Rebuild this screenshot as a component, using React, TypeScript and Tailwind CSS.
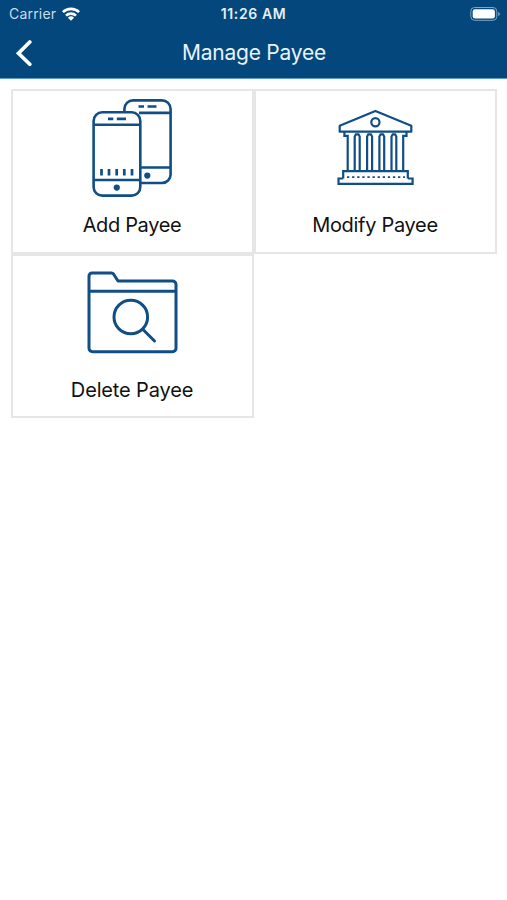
import type { ReactNode } from "react";

function PhonesIcon() {
  return (
    <svg viewBox="77.500 91 110 112" className="h-28 w-[110px]" fill="none" stroke="#114e86" strokeWidth="2.600">
      <path d="M124.900 112V109a8.600 8.600 0 0 1 8.600-8.600H162.500a8.600 8.600 0 0 1 8.600 8.600V174.400a8.600 8.600 0 0 1-8.600 8.600H141.500" />
      <path d="M139.500 112.900H171M141.500 167.500H171" />
      <path d="M139 106.500H144.500M148 106.500H157" />
      <rect x="94.100" y="112.300" width="46.700" height="83.300" rx="8.600" />
      <path d="M94 124.700H141M94 180H141" />
      <path d="M108.500 118.900H113.800M117.300 118.900H126.500" />
      <path d="M102 169V175.500M109.500 169V175.500M117.200 169V175.500M124.800 169V175.500M132.500 169V175.500" strokeWidth="2.700" />
      <circle cx="117.300" cy="187.600" r="3.100" fill="#114e86" stroke="none" />
      <circle cx="147.800" cy="175.600" r="3.100" fill="#114e86" stroke="none" />
    </svg>
  );
}

function BankIcon() {
  return (
    <svg viewBox="320.500 91 110 112" className="h-28 w-[110px]" fill="none" stroke="#114e86" strokeWidth="2.200">
      <path d="M340.200 131.700V125.700L375.900 110.900L411.800 125.700V131.700Z" strokeLinejoin="round" />
      <circle cx="375.900" cy="122.300" r="4.100" />
      <path d="M344.900 132V135.800H348.200V171M407 132V135.800H403.700V171" />
      <path d="M355.200 171V136.500L356.400 134.300H359L360.200 136.500V171M367.600 171V136.500L368.800 134.300H371.400L372.600 136.500V171M379.900 171V136.500L381.100 134.300H383.500L384.700 136.500V171M392 171V136.500L393.200 134.300H395.600L396.800 136.500V171" />
      <path d="M343.700 178.500V171.200H408.300V178.500M343.700 178.500H339V183.800H413.100V178.500H408.300" />
      <path d="M347.500 177.100H405.500" strokeWidth="1.800" strokeDasharray="2.300 2.800" />
    </svg>
  );
}

function FolderIcon() {
  return (
    <svg viewBox="77.500 256 110 112" className="h-28 w-[110px]" fill="none" stroke="#114e86" strokeWidth="3">
      <path d="M89.500 276a3 3 0 0 1 3-3H112q1.200 0 2 1L118.500 281H173a3.500 3.500 0 0 1 3.500 3.500V348.200a3.500 3.500 0 0 1-3.500 3.500H93a3.500 3.500 0 0 1-3.500-3.500Z" strokeLinejoin="round" />
      <path d="M89.500 291.200H176.500" />
      <circle cx="131.300" cy="317" r="16.800" />
      <path d="M143.500 329.500L155 341" strokeLinecap="round" />
    </svg>
  );
}

function Tile({ label, spacing, children }: { label: string; spacing: string; children: ReactNode }) {
  return (
    <button className="flex h-[164.500px] flex-col items-center border-2 border-[#e6e6e6] bg-white">
      {children}
      <span className={`mt-2 text-[20px] leading-7 text-[#111] ${spacing}`}>{label}</span>
    </button>
  );
}

export default function App() {
  return (
    <main className="h-[900px] w-[507px] overflow-hidden bg-white font-['Inter',sans-serif]">
      <header className="h-[79px] border-b border-[#5b9acb] bg-[#03477c] text-white">
        <div className="grid h-7 grid-cols-3 items-center pl-[9px] pr-[9px]">
          <div className="-mt-px flex items-center gap-[6px] text-[14px] text-[#c9dcea]">
            <span className="tracking-[0.2px]">Carrier</span>
            <svg viewBox="0 0 18 14" className="h-[14px] w-[18px]" fill="none" stroke="white" strokeWidth="2.600">
              <path d="M.9 5.200a11.500 11.500 0 0 1 16.200 0M4 8.700a7.100 7.100 0 0 1 10 0" />
              <path d="M9 13.800L5.900 10.800a4.500 4.500 0 0 1 6.200 0Z" fill="white" stroke="none" />
            </svg>
          </div>
          <time className="-mt-0.5 text-center text-[14px] font-semibold tracking-[0.600px] text-[#e4eef6]">11:26 AM</time>
          <svg viewBox="0 0 30 14" className="-mr-0.5 -mt-px h-[14px] w-[30px] justify-self-end">
            <rect x=".8" y=".5" width="26" height="12.800" rx="3.800" fill="none" stroke="#7da5c4" />
            <rect x="2.700" y="2.300" width="22.200" height="9.200" rx="2.300" fill="white" />
            <path d="M28.200 5V9q1.700-.5 1.700-2t-1.700-2Z" fill="#7da5c4" />
          </svg>
        </div>
        <div className="grid h-[49px] grid-cols-[61px_1fr_60px] items-center">
          <button aria-label="Back" className="pl-[15px]">
            <svg viewBox="0 0 17 28" className="h-7 w-[17px]" fill="none" stroke="white" strokeWidth="3.700" strokeLinecap="round">
              <path d="M14.800 3L3.500 14.200L14.800 25.300" />
            </svg>
          </button>
          <h1 className="text-center text-[21px] tracking-[-0.250px] text-[#e8f1f8]">Manage Payee</h1>
        </div>
      </header>
      <section className="grid grid-cols-2 px-[10.500px] pt-[10px]">
        <Tile label="Add Payee" spacing="tracking-[-0.350px]"><PhonesIcon /></Tile>
        <Tile label="Modify Payee" spacing="tracking-[-0.300px]"><BankIcon /></Tile>
        <Tile label="Delete Payee" spacing="tracking-[-0.150px]"><FolderIcon /></Tile>
      </section>
    </main>
  );
}
